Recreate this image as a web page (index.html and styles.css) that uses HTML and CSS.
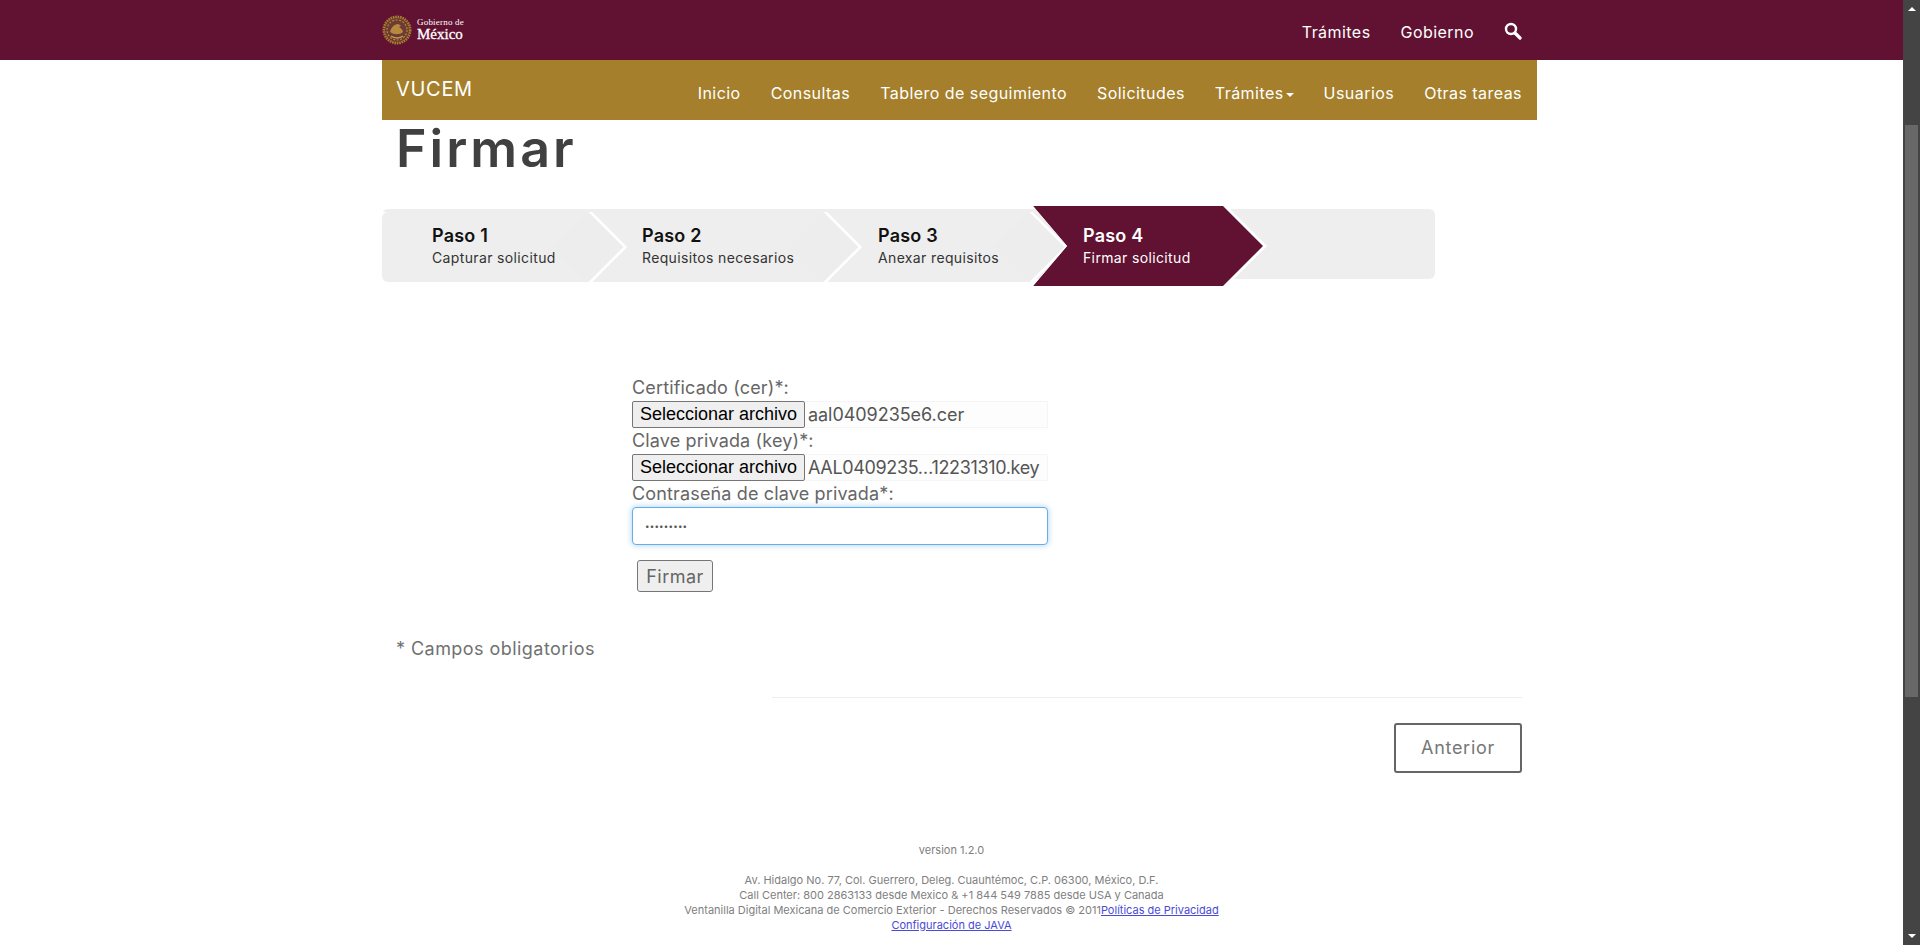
FILE: index.html
```html
<!DOCTYPE html>
<html>
	<head>
		<meta charset="UTF-8">
		<title>Firmar</title>
		<link rel="stylesheet" href="styles.css">
	</head>
	<body>
		<div class="page">
			<!--encabezado de gobierno-->
			<header class="topBar">
				<div class="container topInner">
					<a class="logo" href="#">
						<svg class="escudo" width="30" height="30" viewBox="0 0 30 30">
							<circle cx="15" cy="15" r="13.2" fill="#6d3a34" stroke="#a57f2c" stroke-width="2.6" stroke-dasharray="1.6 0.8"/>
							<circle cx="15" cy="15" r="10" fill="none" stroke="#b58a3c" stroke-width="1.2" stroke-dasharray="2 1.5"/>
							<path d="M8 17c1-4 4-8 8-8 1 0 2 1 3 2l-2 1c2 1 4 3 4 5-3 3-9 3-13 0z" fill="#b58a3c"/>
							<path d="M9 21c3 2.500 9 2.500 12 0" fill="none" stroke="#c49a4a" stroke-width="1.5"/>
						</svg>
						<span class="logoText"><small>Gobierno de</small><b>México</b></span>
					</a>
					<nav class="topNav">
						<a href="#">Trámites</a>
						<a href="#">Gobierno</a>
						<a href="#" class="lupa">
							<svg width="18" height="18" viewBox="0 0 18 18">
								<circle cx="7" cy="7" r="5" fill="none" stroke="#fff" stroke-width="2.4"/>
								<path d="M11 11l5 5" stroke="#fff" stroke-width="3.2" stroke-linecap="round"/>
							</svg>
						</a>
					</nav>
				</div>
			</header>

			<div class="container">
				<!--barra del sistema-->
				<div class="subBar">
					<a class="brand" href="#">VUCEM</a>
					<nav class="subNav">
						<a href="#">Inicio</a>
						<a href="#">Consultas</a>
						<a href="#">Tablero de seguimiento</a>
						<a href="#">Solicitudes</a>
						<a href="#">Trámites<i class="caret"></i></a>
						<a href="#">Usuarios</a>
						<a href="#">Otras tareas</a>
					</nav>
				</div>

				<h1 class="title">Firmar</h1>

				<!--pasos del asistente-->
				<div class="wizard">
					<div class="step step1"><b>Paso 1</b><span>Capturar solicitud</span></div>
					<div class="step step2"><b>Paso 2</b><span>Requisitos necesarios</span></div>
					<div class="step step3"><b>Paso 3</b><span>Anexar requisitos</span></div>
					<div class="step step4"><b>Paso 4</b><span>Firmar solicitud</span></div>
				</div>

				<form class="firma">
					<label>Certificado (cer)*:</label>
					<div class="fileRow"><button type="button" class="fileBtn">Seleccionar archivo</button><span>aal0409235e6.cer</span></div>
					<label>Clave privada (key)*:</label>
					<div class="fileRow"><button type="button" class="fileBtn">Seleccionar archivo</button><span class="nombreLargo">AAL0409235…12231310.key</span></div>
					<label>Contraseña de clave privada*:</label>
					<input class="clave" type="text" value="•••••••••">
					<button type="button" class="btnFirmar">Firmar</button>
				</form>

				<p class="oblig">* Campos obligatorios</p>

				<div class="acciones">
					<a class="btnAnterior" href="#">Anterior</a>
				</div>
			</div>

			<footer class="pie">
				<p class="version">version 1.2.0</p>
				<p>Av. Hidalgo No. 77, Col. Guerrero, Deleg. Cuauhtémoc, C.P. 06300, México, D.F.<br>
				Call Center: 800 2863133 desde Mexico &amp; +1 844 549 7885 desde USA y Canada<br>
				Ventanilla Digital Mexicana de Comercio Exterior - Derechos Reservados © 2011<a href="#">Políticas de Privacidad</a><br>
				<a href="#">Configuración de JAVA</a></p>
			</footer>
		</div>

		<!--barra de desplazamiento-->
		<div class="scroll">
			<i class="arrow up"></i>
			<i class="thumb"></i>
			<i class="arrow down"></i>
		</div>
	</body>
</html>
```

FILE: styles.css
```css
*{
	margin: 0;
	padding: 0;
	box-sizing: border-box;
}
html, body{
	height: 100%;
	overflow: hidden;
}
body{
	display: flex;
	font-family: "Inter", "Liberation Sans", sans-serif;
	color: #666;
	background-color: #fff;
}
a{
	text-decoration: none;
	color: inherit;
}
.page{
	flex: 1;
	min-width: 0;
}
.container{
	width: 1155px;
	margin-left: 382px;
}

/*encabezado*/
.topBar{
	height: 60px;
	background-color: #611232;
}
.topInner{
	height: 60px;
	display: flex;
	justify-content: space-between;
	align-items: center;
}
.logo{
	display: flex;
	align-items: center;
	gap: 5px;
	color: #fff;
	margin-bottom: 1px;
}
.logoText{
	display: flex;
	flex-direction: column;
	font-family: "Liberation Serif", serif;
	line-height: 1;
}
.logoText small{
	font-size: 9px;
	letter-spacing: 0.2px;
}
.logoText b{
	font-size: 15px;
	font-weight: 400;
	-webkit-text-stroke: 0.3px #fff;
}
.topNav{
	display: flex;
	align-items: center;
	gap: 30px;
	margin-top: 4px;
	padding-right: 15px;
	color: #fff;
	font-size: 16px;
	letter-spacing: 0.45px;
}
.lupa{
	display: flex;
	margin-bottom: 3px;
}

/*barra dorada*/
.subBar{
	height: 60px;
	background-color: #a57f2c;
	color: #fff;
	display: flex;
	justify-content: space-between;
	padding: 0 15px 0 14px;
}
.brand{
	font-size: 20px;
	letter-spacing: 0.7px;
	line-height: 58px;
}
.subNav{
	display: flex;
	gap: 30px;
	font-size: 16px;
	letter-spacing: 0.45px;
	line-height: 66px;
}
.caret{
	display: inline-block;
	margin-left: 2px;
	vertical-align: middle;
	border-top: 4px solid #fff;
	border-left: 4px solid transparent;
	border-right: 4px solid transparent;
}

.title{
	font-size: 52px;
	font-weight: 600;
	line-height: 58px;
	padding: 0 14px 2px;
	color: #404041;
	letter-spacing: 3px;
}

/*pasos*/
.wizard{
	display: flex;
	align-items: flex-start;
	width: 1053px;
	height: 70px;
	margin-top: 29px;
	padding-top: 3px;
	background-color: #eee;
	border-radius: 6px;
}
.step{
	--s: 35px;
	position: relative;
	flex: none;
	height: 70px;
	margin-left: -35px;
	padding: 0 0 4px 50px;
	display: flex;
	flex-direction: column;
	justify-content: center;
	color: #333;
	font-size: 14px;
	letter-spacing: 0.36px;
	background-color: #fff;
	clip-path: polygon(0 0, calc(100% - var(--s)) 0, 100% 50%, calc(100% - var(--s)) 100%, 0 100%, var(--s) 50%);
}
/*el relleno del paso, 4px mas corto para que se vea la flecha blanca*/
.step::before{
	content: "";
	position: absolute;
	top: 0;
	bottom: 0;
	left: 0;
	right: 4px;
	background-color: #eee;
	clip-path: polygon(0 0, calc(100% - var(--s)) 0, 100% 50%, calc(100% - var(--s)) 100%, 0 100%, var(--s) 50%);
}
/*rombo apenas mas oscuro en la punta*/
.step::after{
	content: "";
	position: absolute;
	top: 10px;
	right: 14px;
	width: 50px;
	height: 50px;
	background-color: #ededed;
	transform: rotate(45deg);
}
.step b, .step span{
	position: relative;
	z-index: 1;
}
.step b{
	font-size: 18px;
	font-weight: 600;
	letter-spacing: 0.2px;
	color: #111;
	line-height: 24px;
}
.step span{
	line-height: 19px;
}
.step1{
	width: 245px;
	margin-left: 0;
	clip-path: polygon(0 0, calc(100% - var(--s)) 0, 100% 50%, calc(100% - var(--s)) 100%, 0 100%);
}
.step1::before{
	border-radius: 6px 0 0 6px;
	clip-path: polygon(0 0, calc(100% - var(--s)) 0, 100% 50%, calc(100% - var(--s)) 100%, 0 100%);
}
.step2{
	width: 270px;
}
.step3{
	width: 241px;
	padding-left: 51px;
}
.step4{
	width: 234px;
	height: 80px;
	margin-top: -6px;
	padding-bottom: 2px;
	color: #fff;
	clip-path: polygon(0 0, calc(100% - 40px) 0, 100% 50%, calc(100% - 40px) 100%, 0 100%, 34px 50%);
}
.step4::before{
	background-color: #611232;
	clip-path: polygon(0 0, calc(100% - 40px) 0, 100% 50%, calc(100% - 40px) 100%, 0 100%, 34px 50%);
}
.step4::after{
	display: none;
}
.step4 b{
	color: #fff;
}

/*formulario*/
.firma{
	width: 416px;
	margin: 96px 0 0 250px;
	display: flex;
	flex-direction: column;
	font-size: 18px;
	letter-spacing: 0.15px;
	line-height: 26px;
}
.fileRow{
	display: flex;
	align-items: center;
	height: 27px;
	background-color: #fdfdfd;
	border: 1px solid #f5f5f5;
	border-left: 0;
	font-size: 18px;
	letter-spacing: -0.05px;
	color: #555;
	white-space: nowrap;
}
.nombreLargo{
	letter-spacing: -0.35px;
}
.fileBtn{
	flex: none;
	width: 173px;
	height: 27px;
	margin-right: 3px;
	border: 1px solid #767676;
	border-radius: 2px;
	background-color: #efefef;
	color: #000;
	font: 18px "Liberation Sans", sans-serif;
}
.clave{
	width: 416px;
	height: 38px;
	padding: 0 12px;
	border: 1px solid #66afe9;
	border-radius: 4px;
	box-shadow: 0 0 6px rgba(102,175,233,.6);
	color: #555;
	font: 8px "Inter", sans-serif;
	letter-spacing: 0.2px;
	outline: none;
}
.btnFirmar{
	align-self: flex-start;
	width: 76px;
	height: 32px;
	margin: 15px 0 0 5px;
	border: 1px solid #767676;
	border-radius: 3px;
	background-color: #efefef;
	color: #666;
	font: 18px "Inter", sans-serif;
	letter-spacing: 0.5px;
}
.oblig{
	margin: 44px 0 0 14px;
	font-size: 18px;
	letter-spacing: 0.45px;
	line-height: 25px;
	color: #6f7271;
}

.acciones{
	margin: 36px 15px 0 390px;
	border-top: 1px solid #eee;
	padding-top: 25px;
	display: flex;
	justify-content: flex-end;
}
.btnAnterior{
	width: 128px;
	height: 50px;
	border: 2px solid #666;
	border-radius: 3px;
	text-align: center;
	font-size: 18px;
	letter-spacing: 0.7px;
	line-height: 46px;
	color: #777;
}

/*pie*/
.pie{
	margin-top: 70px;
	text-align: center;
	font-size: 11px;
	line-height: 15px;
	color: #808080;
}
.version{
	margin-bottom: 15px;
}
.pie a{
	color: #4a4ad6;
	text-decoration: underline;
}

/*barra de desplazamiento*/
.scroll{
	width: 17px;
	height: 945px;
	flex: none;
	display: flex;
	flex-direction: column;
	align-items: center;
	background-color: #444;
}
.arrow{
	border-left: 4px solid transparent;
	border-right: 4px solid transparent;
}
.arrow.up{
	margin-top: 7px;
	border-bottom: 4px solid #fff;
}
.thumb{
	width: 13px;
	height: 572px;
	margin-top: 114px;
	background-color: #686868;
}
.arrow.down{
	margin-top: auto;
	margin-bottom: 7px;
	border-top: 4px solid #fff;
}
```
